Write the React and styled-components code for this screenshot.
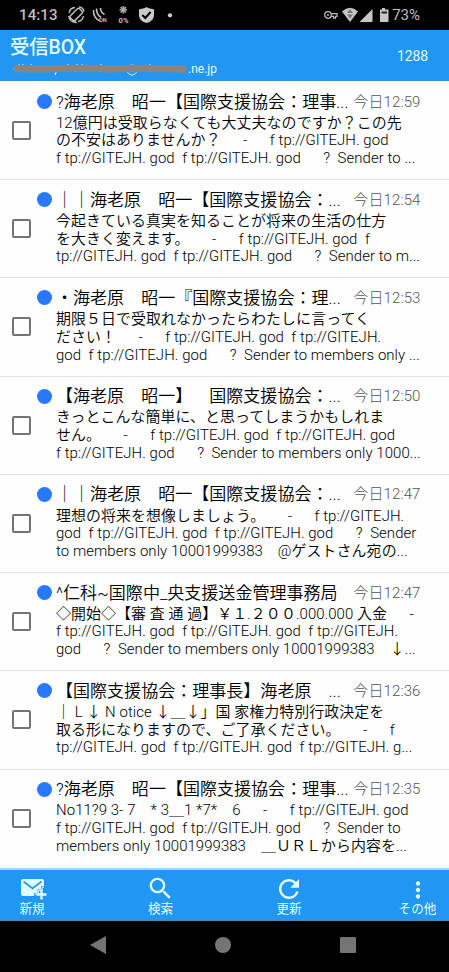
import React from "react";
import styled, { createGlobalStyle } from "styled-components";
import { MdMoreVert, MdRefresh, MdSearch } from "react-icons/md";

const GlobalStyle = createGlobalStyle`
  * {
    box-sizing: border-box;
  }

  body {
    margin: 0;
    background: #000;
    font-family: Roboto, "Noto Sans CJK JP", sans-serif;
    text-spacing-trim: space-all;
  }
`;

const Screen = styled.div`
  display: flex;
  flex-direction: column;
  width: 449px;
  height: 972px;
  overflow: hidden;
  background: #fefefe;
`;

const StatusBar = styled.div`
  display: flex;
  align-items: center;
  justify-content: space-between;
  flex: none;
  height: 30px;
  padding: 0 29px 0 19px;
  background: #000;
  color: #bebebe;
`;

const StatusText = styled.span`
  font-size: 15px;
  line-height: 30px;
  font-weight: ${({ $weight }) => $weight || 400};
  letter-spacing: ${({ $spacing }) => $spacing || "0"};
`;

const StatusGroup = styled.div`
  display: flex;
  align-items: center;
  gap: ${({ $gap }) => $gap || 0}px;
`;

const Header = styled.header`
  display: flex;
  align-items: center;
  justify-content: space-between;
  flex: none;
  height: 51px;
  padding: 0 21px 0 10px;
  background: #2196f3;
  border-bottom: 1px solid #3b8fd4;
  color: #e2fbff;
`;

const Heading = styled.div`
  display: flex;
  flex-direction: column;
  height: 51px;
`;

const Title = styled.h1`
  margin: 5px 0 0;
  font-size: 19.4px;
  line-height: 26px;
  font-weight: 500;
  letter-spacing: -0.1px;
  white-space: nowrap;
`;

const Address = styled.div`
  display: flex;
  height: 18px;
  font-size: 12px;
  line-height: 17px;
`;

const Count = styled.span`
  margin-top: 2px;
  font-size: 14px;
  line-height: 20px;
  letter-spacing: -0.1px;
`;

const List = styled.main`
  display: flex;
  flex-direction: column;
  flex: none;
  height: 788.5px;
  padding-top: 1px;
  overflow: hidden;
  border-bottom: 2px solid #a5dbfa;
`;

const Row = styled.article`
  display: grid;
  grid-template-columns: 37px 19px 1fr;
  flex: none;
  height: 98.22px;
  border-bottom: 1px solid #e4e4e4;

  &:last-child {
    border-bottom: 0;
  }
`;

const CheckCell = styled.div`
  padding: 39px 0 0 12px;
`;

const Checkbox = styled.div`
  width: 19px;
  height: 19px;
  border: 2px solid #747474;
  border-radius: 2px;
`;

const Dot = styled.div`
  width: 15px;
  height: 15px;
  margin-top: 12px;
  border-radius: 50%;
  background: #2979ff;
`;

const Message = styled.div`
  min-width: 0;
  padding-top: 7.5px;
`;

const TopLine = styled.div`
  display: flex;
  justify-content: space-between;
  height: 25.2px;
  padding-right: 28.5px;
  line-height: 25px;
  white-space: pre;
`;

const Sender = styled.span`
  font-size: 17.05px;
  font-weight: 350;
  color: #000;
`;

const Time = styled.time`
  font-size: 15px;
  font-weight: 300;
  line-height: 24px;
  color: #555;
  letter-spacing: 0.1px;
`;

const BodyLine = styled.div`
  height: 17.7px;
  font-size: 14.95px;
  font-weight: 350;
  line-height: 17.7px;
  color: #000;
  white-space: pre;
  letter-spacing: 0.07px;
`;

const Toolbar = styled.nav`
  display: flex;
  justify-content: space-between;
  flex: none;
  height: 51.5px;
  padding: 6px 18.5px 0 19px;
  background: #2196f3;
  border-bottom: 1px solid #4a86b4;
  color: #e2fbff;
`;

const ToolButton = styled.div`
  display: flex;
  flex-direction: column;
  align-items: center;
  width: 26px;
  font-size: 12.6px;
  line-height: 14px;
  white-space: nowrap;
`;

const ToolIcon = styled.span`
  display: flex;
  align-items: center;
  justify-content: center;
  height: 26px;

  svg {
    flex: none;
    overflow: visible;
  }
`;

const MailIcon = styled.svg`
  margin-left: 4px;
`;

const MoreIcon = styled(MdMoreVert)`
  margin-top: 2px;
`;

const SystemNav = styled.div`
  display: flex;
  justify-content: space-between;
  flex: 1;
  padding: 15px 92px 0 89px;
  background: #000;
  color: #757575;
`;

const f = "f tp://GITEJH. god";

const messages = [
  {
    sender: "?海老原　昭一【国際支援協会：理事...",
    time: "今日12:59",
    lines: [
      "12億円は受取らなくても大丈夫なのですか？この先",
      `の不安はありませんか？　  -　  ${f}`,
      `${f}  ${f}　  ?  Sender to ...`,
    ],
  },
  {
    sender: "｜｜海老原　昭一【国際支援協会：...",
    time: "今日12:54",
    lines: [
      "今起きている真実を知ることが将来の生活の仕方",
      `を大きく変えます。　  -　  ${f}  f`,
      `tp://GITEJH. god  ${f}　  ?  Sender to m...`,
    ],
  },
  {
    sender: "・海老原　昭一『国際支援協会：理...",
    time: "今日12:53",
    lines: [
      "期限５日で受取れなかったらわたしに言ってく",
      `ださい！　  -　  ${f}  f tp://GITEJH.`,
      `god  ${f}　  ?  Sender to members only ...`,
    ],
  },
  {
    sender: "【海老原　昭一】　国際支援協会：...",
    time: "今日12:50",
    lines: [
      "きっとこんな簡単に、と思ってしまうかもしれま",
      `せん。　  -　  ${f}  ${f}`,
      `${f}　  ?  Sender to members only 1000...`,
    ],
  },
  {
    sender: "｜｜海老原　昭一【国際支援協会：...",
    time: "今日12:47",
    lines: [
      "理想の将来を想像しましょう。　  -　  f tp://GITEJH.",
      `god  ${f}  ${f}　  ?  Sender`,
      "to members only 10001999383　@ゲストさん宛の...",
    ],
  },
  {
    sender: "^仁科~国際中_央支援送金管理事務局",
    time: "今日12:47",
    lines: [
      "◇開始◇【審 査 通 過】￥１.２００.000.000 入金　  -",
      `${f}  ${f}  f tp://GITEJH.`,
      "god　  ?  Sender to members only 10001999383　↓...",
    ],
  },
  {
    sender: "【国際支援協会：理事長】海老原　...",
    time: "今日12:36",
    lines: [
      "｜ L ↓ N otice ↓＿↓」国 家権力特別行政決定を",
      "取る形になりますので、ご了承ください。　  -　  f",
      `tp://GITEJH. god  ${f}  f tp://GITEJH. g...`,
    ],
  },
  {
    sender: "?海老原　昭一【国際支援協会：理事...",
    time: "今日12:35",
    lines: [
      `No11?9 3- 7　* 3＿1 *7*　6　  -　  ${f}`,
      `${f}  ${f}　  ?  Sender to`,
      "members only 10001999383　＿ＵＲＬから内容を...",
    ],
  },
];

const NotificationIcons = () => (
  <svg width="110" height="24" viewBox="0 0 110 24" fill="none">
    <g stroke="#bebebe" strokeWidth="1.5">
      <rect x="7" y="5" width="6.5" height="13" rx="1.5" transform="rotate(45 10.2 11.500)" />
      <path d="M3.200 10C3.500 7 5.500 4.800 9 4.500M2.800 13c.2 3.500 3 6.300 7 6.500l-2-2.500M17.500 13c-.5 3-2.500 5-5.500 5.500M13 4c2.500.2 4.500 2 5 4.500" />
    </g>
    <g stroke="#bebebe" strokeWidth="1.600">
      <path d="M27.500 7c-.5 5 2.500 9.500 6.500 11M30.500 5.500c0 4.500 1.500 7 4.500 9M34.500 5c0 3 1.500 5 4 6.500" />
    </g>
    <text x="33" y="18.500" fontSize="5.500" fontWeight="700" fill="#bebebe">ON</text>
    <g stroke="#a5a5a5" strokeWidth="1.600">
      <path d="M57.300 3v7.600M53.500 6.800h7.600M54.600 4.100l5.400 5.400M60 4.100l-5.400 5.400" />
    </g>
    <text x="52.500" y="20" fontSize="7.500" fontWeight="700" fill="#bebebe" textLength="10">0%</text>
    <path d="M80.500 4c2 1.300 5 2.200 7.500 2.200V12c0 4.500-3.500 6.800-7.500 8-4-1.200-7.500-3.500-7.500-8V6.200C75.500 6.200 78.500 5.300 80.500 4z" fill="#c9c9c9" />
    <path d="m76.300 12 3 3 5.300-6" stroke="#000" strokeWidth="2" />
    <circle cx="104" cy="12.300" r="2.100" fill="#d0d0d0" />
  </svg>
);

const SystemIcons = () => (
  <svg width="68" height="20" viewBox="0 0 68 20" fill="none">
    <circle cx="5" cy="10" r="3.300" stroke="#bebebe" strokeWidth="1.300" />
    <circle cx="5" cy="10" r="1" fill="#bebebe" />
    <path d="M8 8.700h6v2.600h-1.500v1.800h-2v-1.800H8" stroke="#bebebe" strokeWidth="1.200" />
    <path d="M19 6.500Q27-.8 35 6.500L27 17z" fill="#c6c6c6" />
    <path d="m27 4 3 4h-6zM24 9.500h6l-3 4z" fill="#777" />
    <path d="M49.500 4v13H36.500z" fill="#c6c6c6" />
    <path d="M59 3h3v1.500H65.500V17h-8.500V4.500h2z" fill="#c6c6c6" />
    <path d="M58.500 6.500h5.500v2h-5.500z" fill="#222" />
  </svg>
);

const MailPlusIcon = () => (
  <MailIcon width="26" height="22" viewBox="0 0 26 22" fill="none">
    <path d="M2 1h19q2 0 2 2v14q0 1-1 1H2q-2 0-2-2V3q0-2 2-2z" fill="currentColor" />
    <path d="m2.500 3.500 9 7 9-7" stroke="#2196f3" strokeWidth="1.600" />
    <path d="M13 18.500V15h3.500v-3.500H20V8h4v11H13z" fill="#2196f3" />
    <path d="M14 17v-1h3.500v-3.500H21V9h2" stroke="currentColor" strokeWidth="1" />
    <path d="M20.500 11.500v10M15.500 16.500h10" stroke="currentColor" strokeWidth="2.300" />
  </MailIcon>
);

const HiddenAddress = () => (
  <svg width="178" height="18" viewBox="0 0 178 18" fill="none">
    <path d="M3 8h4M9 3v4M13 3v3M17 4v3M21 3v3M32 4v3M47 9l-2 5M58 3v2M67 3v3M72 3v3M91 3v3M108 4v2M113 4v2M140 3v3M152 6h22" stroke="#d5edf5" strokeWidth="1.200" />
    <circle cx="122" cy="9" r="5" stroke="#d5edf5" />
    <path d="M7 7.500c28 1 50-.5 76 0s62-.5 90 .5" stroke="#878583" strokeWidth="7.500" strokeLinecap="round" />
  </svg>
);

const App = () => (
  <>
    <GlobalStyle />
    <Screen>
      <StatusBar>
        <StatusGroup $gap={8}>
          <StatusText $weight={500} $spacing="0.1px">14:13</StatusText>
          <NotificationIcons />
        </StatusGroup>
        <StatusGroup $gap={1}>
          <SystemIcons />
          <StatusText>73%</StatusText>
        </StatusGroup>
      </StatusBar>

      <Header>
        <Heading>
          <Title>受信BOX</Title>
          <Address>
            <HiddenAddress />
            .ne.jp
          </Address>
        </Heading>
        <Count>1288</Count>
      </Header>

      <List>
        {messages.map(({ sender, time, lines }) => (
          <Row key={time + sender}>
            <CheckCell>
              <Checkbox />
            </CheckCell>
            <Dot />
            <Message>
              <TopLine>
                <Sender>{sender}</Sender>
                <Time>{time}</Time>
              </TopLine>
              {lines.map((line) => (
                <BodyLine key={line}>{line}</BodyLine>
              ))}
            </Message>
          </Row>
        ))}
      </List>

      <Toolbar>
        <ToolButton>
          <ToolIcon>
            <MailPlusIcon />
          </ToolIcon>
          新規
        </ToolButton>
        <ToolButton>
          <ToolIcon>
            <MdSearch size={29} />
          </ToolIcon>
          検索
        </ToolButton>
        <ToolButton>
          <ToolIcon>
            <MdRefresh size={30} />
          </ToolIcon>
          更新
        </ToolButton>
        <ToolButton>
          <ToolIcon>
            <MoreIcon size={26} />
          </ToolIcon>
          その他
        </ToolButton>
      </Toolbar>

      <SystemNav>
        <svg width="18" height="18" viewBox="0 0 18 18">
          <path d="M17 0v18L1 9z" fill="currentColor" />
        </svg>
        <svg width="18" height="18" viewBox="0 0 18 18">
          <circle cx="9" cy="9" r="8" fill="currentColor" />
        </svg>
        <svg width="18" height="18" viewBox="0 0 18 18">
          <rect x="1" y="1" width="16" height="16" rx="1" fill="currentColor" />
        </svg>
      </SystemNav>
    </Screen>
  </>
);

export default App;
